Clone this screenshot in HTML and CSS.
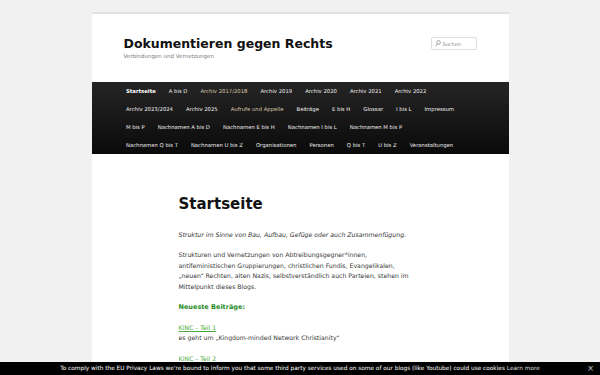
FILE: index.html
```html
<!DOCTYPE html>
<html lang="de">
	<head>
		<meta charset="UTF-8">
		<title>Dokumentieren gegen Rechts</title>
		<link rel="stylesheet" href="styles.css">
	</head>
	<body>
		<div class="page">
			<header class="branding">
				<div class="site-name">
					<h1 class="site-title"><a href="#">Dokumentieren gegen Rechts</a></h1>
					<p class="site-desc">Verbindungen und Vernetzungen</p>
				</div>
				<form class="search">
					<svg class="search-icon" width="6" height="7" viewBox="0 0 6 7"><circle cx="3.6" cy="2.4" r="1.8" fill="none" stroke="#888" stroke-width="0.8"/><path d="M2.4 3.7 L0.8 6.2" stroke="#888" stroke-width="0.8"/></svg>
					<span class="search-text">Suchen</span>
				</form>
			</header>
			<nav class="access">
				<ul class="menu">
					<li class="current"><a href="#">Startseite</a></li>
					<li><a href="#">A bis D</a></li>
					<li class="visited"><a href="#">Archiv 2017/2018</a></li>
					<li><a href="#">Archiv 2019</a></li>
					<li><a href="#">Archiv 2020</a></li>
					<li><a href="#">Archiv 2021</a></li>
					<li><a href="#">Archiv 2022</a></li>
					<li><a href="#">Archiv 2023/2024</a></li>
					<li><a href="#">Archiv 2025</a></li>
					<li class="visited"><a href="#">Aufrufe und Appelle</a></li>
					<li><a href="#">Beiträge</a></li>
					<li><a href="#">E bis H</a></li>
					<li><a href="#">Glossar</a></li>
					<li><a href="#">I bis L</a></li>
					<li><a href="#">Impressum</a></li>
					<li><a href="#">M bis P</a></li>
					<li><a href="#">Nachnamen A bis D</a></li>
					<li><a href="#">Nachnamen E bis H</a></li>
					<li><a href="#">Nachnamen I bis L</a></li>
					<li><a href="#">Nachnamen M bis P</a></li>
					<li><a href="#">Nachnamen Q bis T</a></li>
					<li><a href="#">Nachnamen U bis Z</a></li>
					<li><a href="#">Organisationen</a></li>
					<li><a href="#">Personen</a></li>
					<li><a href="#">Q bis T</a></li>
					<li><a href="#">U bis Z</a></li>
					<li><a href="#">Veranstaltungen</a></li>
				</ul>
			</nav>
			<div class="content">
				<h1 class="entry-title">Startseite</h1>
				<p class="lead">Struktur im Sinne von Bau, Aufbau, Gefüge oder auch Zusammenfügung.</p>
				<p>Strukturen und Vernetzungen von Abtreibungsgegner*innen, antifeministischen Gruppierungen, christlichen Fundis, Evangelikalen, „neuen“ Rechten, alten Nazis, selbstverständlich auch Parteien, stehen im Mittelpunkt dieses Blogs.</p>
				<h2 class="recent-title">Neueste Beiträge:</h2>
				<p><a class="post-link" href="#">KiNC – Teil 1</a><br>es geht um „Kingdom-minded Network Christianity“</p>
				<p><a class="post-link" href="#">KiNC – Teil 2</a><br>&nbsp;</p>
			</div>
		</div>
		<div class="cookie-bar">
			<span>To comply with the EU Privacy Laws we're bound to inform you that some third party services used on some of our blogs (like Youtube) could use cookies <a href="#">Learn more</a></span>
			<span class="cookie-close">×</span>
		</div>
	</body>
</html>
```

FILE: styles.css
```css
*{
	margin: 0;
	padding: 0;
	box-sizing: border-box;
}
body{
	background: #f1f1f1;
	font-family: "DejaVu Sans", sans-serif;
	color: #373737;
}
a{
	text-decoration: none;
}
ul{
	list-style: none;
}

/* weisse Seite */
.page{
	width: 417px;
	margin: 12px auto 0;
	background: #fff;
	min-height: 420px;
}

/* Kopfbereich */
.branding{
	border-top: 2px solid #e2e2e2;
	height: 70px;
	padding: 22px 32px 0 32px;
	display: flex;
	justify-content: space-between;
	align-items: flex-start;
}
.site-title{
	font-size: 12.5px;
	line-height: 15px;
	font-weight: bold;
}
.site-title a{
	color: #111;
}
.site-desc{
	font-size: 5.5px;
	line-height: 8px;
	color: #7a7a7a;
	margin-top: 1px;
}
.search{
	width: 46px;
	height: 13px;
	margin-top: 1px;
	border: 1px solid #ddd;
	border-radius: 2px;
	display: flex;
	align-items: center;
	padding-left: 3px;
	gap: 2px;
}
.search-text{
	font-size: 5px;
	color: #888;
}

/* Navigation */
.access{
	background: linear-gradient(#252525, #0a0a0a);
	padding: 0 38px 0 28px;
}
.menu{
	display: flex;
	flex-wrap: wrap;
}
.menu li a{
	display: block;
	padding: 0 6.5px;
	line-height: 18px;
	font-size: 5.3px;
	color: #eee;
}
.menu li.current a{
	font-weight: bold;
	color: #fff;
}
.menu li.visited a{
	color: #d9c8a8;
}

/* Inhalt */
.content{
	padding: 40px 90px 0 87px;
	font-size: 6.2px;
	line-height: 10.4px;
}
.entry-title{
	font-size: 15px;
	line-height: 20px;
	color: #111;
	margin-bottom: 16px;
}
.content p{
	margin-bottom: 10px;
}
.content .lead{
	font-style: italic;
}
.recent-title{
	font-size: 6.5px;
	line-height: 10.4px;
	color: #1f8a1f;
	margin-bottom: 10.4px;
}
.post-link{
	color: #4caa3c;
	text-decoration: underline;
}

/* Cookie-Hinweis */
.cookie-bar{
	position: fixed;
	left: 0;
	right: 0;
	bottom: 0;
	height: 13px;
	background: #000;
	color: #fff;
	font-size: 5.8px;
	line-height: 13px;
	text-align: center;
}
.cookie-bar a{
	color: #ddd;
}
.cookie-close{
	position: absolute;
	right: 6px;
	top: 0;
	font-size: 8px;
	color: #ccc;
}
```
